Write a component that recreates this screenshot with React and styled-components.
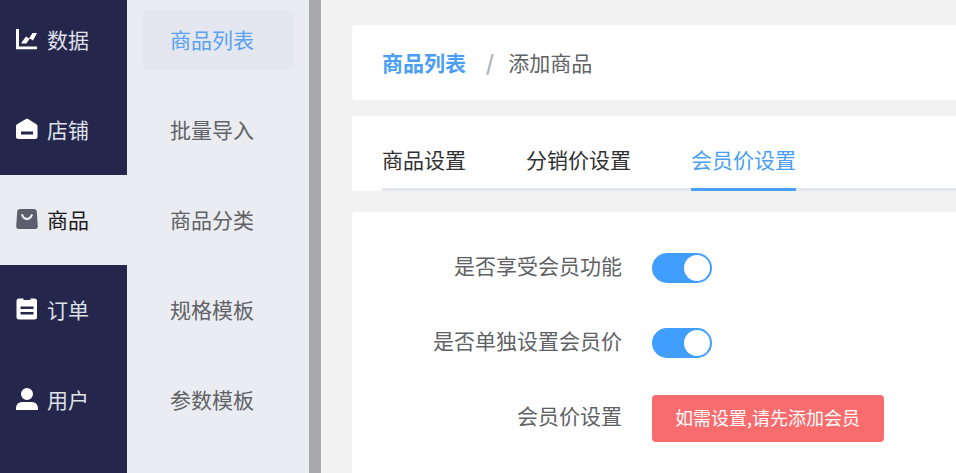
import React from "react";
import styled, { createGlobalStyle } from "styled-components";

const GlobalStyle = createGlobalStyle`
  html, body {
    margin: 0;
    padding: 0;
    height: 100%;
    overflow: hidden;
    background: #f2f2f3;
  }
  body {
    font-family: "Noto Sans CJK SC", "Noto Sans", sans-serif;
  }
`;

const Page = styled.div`
  display: grid;
  grid-template-columns: 127px 182px 12px 1fr;
  height: 473px;
  overflow: hidden;
`;

const MainNav = styled.nav`
  background: #25264b;
  margin-top: -5px;
`;

const MainItem = styled.div`
  display: flex;
  align-items: center;
  gap: 9px;
  height: 90px;
  box-sizing: border-box;
  padding: 0 0 2px 16px;
  font-size: 21px;
  color: ${(p) => (p.$active ? "#1a1a1a" : "#dfe1ea")};
  background: ${(p) => (p.$active ? "#ebecf2" : "transparent")};
`;

const Icon = styled.svg`
  width: 22px;
  height: 22px;
  flex: none;
  fill: ${(p) => (p.$active ? "#5b5e6c" : "#ffffff")};
`;

const SubNav = styled.nav`
  background: #ebecf2;
  padding: 10px 15px 0;
`;

const SubItem = styled.div`
  display: flex;
  align-items: center;
  justify-content: center;
  height: 60px;
  box-sizing: border-box;
  padding: 0 12px 2px 0;
  margin-bottom: 30px;
  border-radius: 6px;
  font-size: 21px;
  color: ${(p) => (p.$active ? "#59a2f0" : "#606266")};
  background: ${(p) => (p.$active ? "#e4e7ef" : "transparent")};
`;

const Divider = styled.div`
  background: #a9a9ad;
`;

const Main = styled.main`
  display: flex;
  flex-direction: column;
  padding: 25px 0 0 31px;
  min-width: 0;
`;

const Crumbs = styled.div`
  display: flex;
  align-items: center;
  height: 75px;
  box-sizing: border-box;
  padding: 0 0 2px 30px;
  background: #ffffff;
  border-radius: 4px 0 0 4px;
  font-size: 21px;
`;

const CrumbLink = styled.span`
  font-weight: 700;
  color: #4a9ff5;
`;

const CrumbSep = styled.span`
  margin: 0 14px 0 20px;
  font-weight: 700;
  color: #aeb1b8;
`;

const CrumbText = styled.span`
  color: #606266;
`;

const TabsCard = styled.div`
  margin-top: 16px;
  padding-left: 30px;
  background: #ffffff;
`;

const TabRow = styled.div`
  display: flex;
  gap: 60px;
  height: 75px;
  box-sizing: border-box;
  border-bottom: 3px solid #e4e7f0;
`;

const Tab = styled.div`
  display: flex;
  align-items: center;
  height: 75px;
  padding-top: 13px;
  box-sizing: border-box;
  font-size: 21px;
  color: ${(p) => (p.$active ? "#4a9ff5" : "#303133")};
  border-bottom: 3px solid ${(p) => (p.$active ? "#4a9ff5" : "transparent")};
`;

const FormCard = styled.form`
  flex: 1;
  margin-top: 21px;
  padding-top: 18px;
  background: #ffffff;
  border-radius: 4px 0 0 0;
`;

const Row = styled.div`
  display: flex;
  align-items: center;
  gap: 30px;
  height: 75px;
`;

const Label = styled.label`
  width: 270px;
  padding-bottom: 6px;
  text-align: right;
  font-size: 21px;
  color: #606266;
`;

const Toggle = styled.span`
  position: relative;
  display: block;
  width: 60px;
  height: 30px;
  border-radius: 15px;
  background: #409eff;

  &::after {
    content: "";
    position: absolute;
    top: 2px;
    right: 2px;
    width: 26px;
    height: 26px;
    border-radius: 50%;
    background: #ffffff;
  }
`;

const Button = styled.button`
  width: 232px;
  height: 47px;
  margin-top: 2px;
  padding: 0 1px 4px 0;
  border: 0;
  border-radius: 4px;
  background: #f96c6e;
  color: #ffffff;
  font-family: inherit;
  font-size: 18px;
`;

const nav = [
  {
    label: "数据",
    path: "M0 1h3v17.500h18v2.700H0zM5.500 14.500l4.500-6 3 2 3.500-5.500h4.500l-4 7.500-3.200-2-3.500 5H5.500z",
  },
  {
    label: "店铺",
    path: "M9.500 1.300c.9-.6 2.100-.6 3 0l7.500 4.600c1 .6 1.500 1.500 1.500 2.600V18.500a2.500 2.500 0 0 1-2.500 2.500H2.500A2.500 2.500 0 0 1 0 18.500V8.500c0-1.100.5-2 1.500-2.600zM5 13.500v3h12v-3z",
  },
  {
    label: "商品",
    active: true,
    path: "M4 1h14c1.500 0 2.600 1 2.800 2.500l1 15c.1 1.500-1 2.500-2.500 2.500H2.700C1.200 21 .1 20 .2 18.500l1-15C1.400 2 2.500 1 4 1zM5 6.500c1 4 3.500 5.500 6 5.500s5-1.500 6-5.500l-2-.6c-.8 2.700-2.300 3.800-4 3.800s-3.200-1.100-4-3.800z",
  },
  {
    label: "订单",
    path: "M3 .5h4.500v1.500h7V.5H18.500A2.500 2.500 0 0 1 21 3v16a2.500 2.500 0 0 1-2.500 2.500H3A2.500 2.500 0 0 1 .5 19V3A2.500 2.500 0 0 1 3 .5zM4.500 8.500V11h13V8.500zM4.500 14v2.500h13V14z",
  },
  {
    label: "用户",
    path: "M11 0a6 6 0 1 1 0 12a6 6 0 0 1 0-12zM6 14h10c3.500 0 6 2.800 6 6.500V23H0v-2.500C0 16.800 2.500 14 6 14z",
  },
];

const subNav = ["商品列表", "批量导入", "商品分类", "规格模板", "参数模板"];

const App = () => {
  return (
    <Page>
      <GlobalStyle />
      <MainNav>
        {nav.map((item) => (
          <MainItem key={item.label} $active={item.active}>
            <Icon viewBox="0 0 22 22" $active={item.active}>
              <path fillRule="evenodd" d={item.path} />
            </Icon>
            {item.label}
          </MainItem>
        ))}
      </MainNav>
      <SubNav>
        {subNav.map((label, i) => (
          <SubItem key={label} $active={i === 0}>
            {label}
          </SubItem>
        ))}
      </SubNav>
      <Divider />
      <Main>
        <Crumbs>
          <CrumbLink>商品列表</CrumbLink>
          <CrumbSep>/</CrumbSep>
          <CrumbText>添加商品</CrumbText>
        </Crumbs>
        <TabsCard>
          <TabRow>
            <Tab>商品设置</Tab>
            <Tab>分销价设置</Tab>
            <Tab $active>会员价设置</Tab>
          </TabRow>
        </TabsCard>
        <FormCard>
          <Row>
            <Label>是否享受会员功能</Label>
            <Toggle />
          </Row>
          <Row>
            <Label>是否单独设置会员价</Label>
            <Toggle />
          </Row>
          <Row>
            <Label>会员价设置</Label>
            <Button type="button">如需设置,请先添加会员</Button>
          </Row>
        </FormCard>
      </Main>
    </Page>
  );
};

export default App;
